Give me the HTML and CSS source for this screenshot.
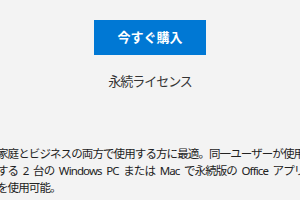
FILE: index.html
```html
<!DOCTYPE html>
<html lang="ja">
<head>
    <meta charset="UTF-8">
    <meta name="viewport" content="width=device-width, initial-scale=1.0">
    <title>Office 購入</title>
    <link rel="stylesheet" href="styles.css">
</head>
<body>
    <div class="buy-box">
        <a class="buy-btn" href="#">今すぐ購入</a>
        <p class="license">永続ライセンス</p>
        <p class="desc">家庭とビジネスの両方で使用する方に最適。同一ユーザーが使用<br>する 2 台の Windows PC または Mac で永続版の Office アプリ<br>を使用可能。</p>
    </div>
</body>
</html>
```

FILE: styles.css
```css
html, body {
    margin: 0;
    height: 100%;
    overflow: hidden;
}

body {
    background-color: #f3f3f3;
    font-family: "Noto Sans", "Noto Sans CJK JP", sans-serif;
    color: #222;
}

.buy-box {
    padding-top: 20px;
    text-align: center;
}

.buy-btn {
    display: inline-block;
    width: 112px;
    height: 35px;
    line-height: 35px;
    background-color: #0078d4;
    color: #fff;
    font-size: 13px;
    font-weight: bold;
    text-decoration: none;
}

.license {
    margin: 16px 0 0;
    font-size: 13px;
    line-height: 20px;
    letter-spacing: -1px;
    color: #333;
}

.desc {
    margin: 54px -3px 0;
    font-size: 11.5px;
    line-height: 17px;
    letter-spacing: -0.9px;
    word-spacing: 2.5px;
    text-align: left;
    white-space: nowrap;
}
```
